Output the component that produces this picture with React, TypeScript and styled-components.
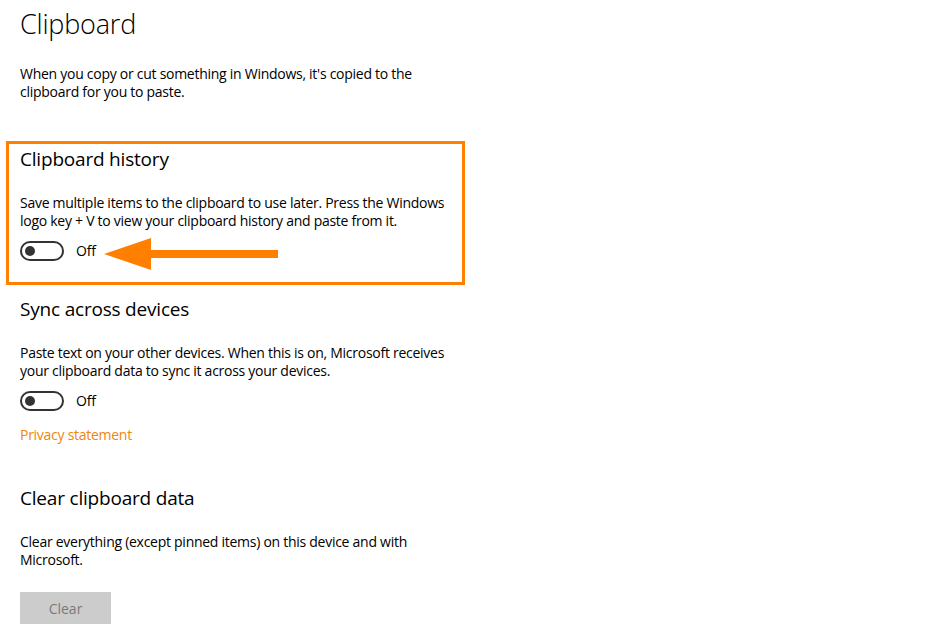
import { FC, ReactNode } from "react";
import styled, { createGlobalStyle } from "styled-components";

const GlobalStyle = createGlobalStyle`
  html, body {
    margin: 0;
    padding: 0;
    background: #ffffff;
  }
  body {
    font-family: "Open Sans", "Noto Sans", "Liberation Sans", sans-serif;
    color: #000000;
  }
`;

const ORANGE = "#ff8000";

const Page = styled.div`
  width: 929px;
  height: 638px;
  overflow: hidden;
  padding: 4px 20px 0;
  box-sizing: border-box;
  display: flex;
  flex-direction: column;
  align-items: flex-start;
`;

const PageTitle = styled.h1`
  margin: 0;
  font-size: 27px;
  font-weight: 300;
  line-height: 40px;
  letter-spacing: -0.2px;
`;

const Heading = styled.h2<{ $top?: number }>`
  margin: ${({ $top }) => $top ?? 0}px 0 0;
  font-size: 19px;
  font-weight: 400;
  line-height: 28px;
  letter-spacing: -0.2px;
`;

const Text = styled.p<{ $top?: number }>`
  margin: ${({ $top }) => $top ?? 0}px 0 0;
  font-size: 14px;
  line-height: 18px;
  letter-spacing: -0.27px;
  white-space: nowrap;
`;

const Highlight = styled.section`
  margin: 40px 0 0 -14px;
  width: 459px;
  box-sizing: border-box;
  border: 3px solid ${ORANGE};
  padding: 1px 0 21px 11px;
`;

const ToggleRow = styled.div<{ $top?: number }>`
  position: relative;
  margin-top: ${({ $top }) => $top ?? 11}px;
  height: 20px;
  display: flex;
  align-items: center;
  gap: 12px;
`;

const Track = styled.span`
  width: 44px;
  height: 20px;
  box-sizing: border-box;
  border: 2px solid #333333;
  border-radius: 10px;
  display: flex;
  align-items: center;
  padding-left: 3px;
`;

const Knob = styled.span`
  width: 10px;
  height: 10px;
  border-radius: 50%;
  background: #333333;
`;

const ToggleLabel = styled.span`
  font-size: 14px;
  line-height: 20px;
  letter-spacing: -0.2px;
`;

const Pointer = styled.svg`
  position: absolute;
  left: 84px;
  top: -3px;
`;

const Link = styled.a`
  margin-top: 15px;
  font-size: 14px;
  line-height: 18px;
  letter-spacing: -0.27px;
  color: #f0860a;
  text-decoration: none;
`;

const ClearButton = styled.button`
  margin-top: 23px;
  width: 91px;
  height: 32px;
  border: none;
  background: #cccccc;
  color: #7a7a7a;
  font-family: inherit;
  font-size: 14px;
  padding: 0;
`;

type ToggleProps = {
  top?: number;
  children?: ReactNode;
};

const Toggle: FC<ToggleProps> = ({ top, children }) => (
  <ToggleRow $top={top}>
    <Track>
      <Knob />
    </Track>
    <ToggleLabel>Off</ToggleLabel>
    {children}
  </ToggleRow>
);

const Arrow = () => (
  <Pointer width="174" height="32" viewBox="0 0 174 32">
    <rect x="44" y="12" width="130" height="8" fill={ORANGE} />
    <polygon points="0,16 47,0 47,32" fill={ORANGE} />
  </Pointer>
);

const App = () => {
  return (
    <>
      <GlobalStyle />
      <Page>
        <PageTitle>Clipboard</PageTitle>
        <Text $top={21}>
          When you copy or cut something in Windows, it's copied to the
          <br />
          clipboard for you to paste.
        </Text>

        <Highlight>
          <Heading>Clipboard history</Heading>
          <Text $top={21}>
            Save multiple items to the clipboard to use later. Press the Windows
            <br />
            logo key + V to view your clipboard history and paste from it.
          </Text>
          <Toggle>
            <Arrow />
          </Toggle>
        </Highlight>

        <Heading $top={10}>Sync across devices</Heading>
        <Text $top={21}>
          Paste text on your other devices. When this is on, Microsoft receives
          <br />
          your clipboard data to sync it across your devices.
        </Text>
        <Toggle />
        <Link href="#">Privacy statement</Link>

        <Heading $top={40}>Clear clipboard data</Heading>
        <Text $top={21}>
          Clear everything (except pinned items) on this device and with
          <br />
          Microsoft.
        </Text>
        <ClearButton disabled>Clear</ClearButton>
      </Page>
    </>
  );
};

export default App;
